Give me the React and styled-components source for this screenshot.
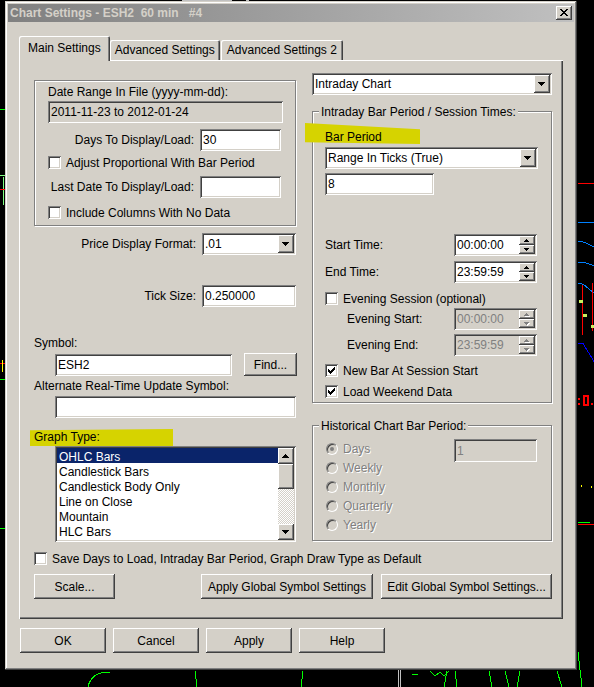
import React from 'react';
import styled, { createGlobalStyle, css } from 'styled-components';

const FACE = '#d4d0c8';
const HL = '#d6d300';

const raised = css`
  box-shadow: inset -1px -1px #404040, inset 1px 1px #ffffff, inset -2px -2px #808080, inset 2px 2px ${FACE};
`;
const sunken = css`
  box-shadow: inset 1px 1px #808080, inset -1px -1px #ffffff, inset 2px 2px #404040, inset -2px -2px ${FACE};
`;

const Global = createGlobalStyle`
  html, body { margin: 0; padding: 0; background: #000; }
  body { font-family: "Liberation Sans", Arial, sans-serif; font-size: 12px; color: #000; }
  * { box-sizing: border-box; }
`;

const Desktop = styled.div`
  position: relative;
  width: 594px;
  height: 687px;
  overflow: hidden;
  background: #000;
  padding: 1px 0 0 5px;
`;

const ChartLayer = styled.svg`
  position: absolute;
  left: 0;
  top: 0;
`;

const Window = styled.div`
  position: relative;
  width: 572px;
  height: 669px;
  padding: 3px;
  background: ${FACE};
  box-shadow: inset -1px -1px #404040, inset 1px 1px ${FACE}, inset -2px -2px #808080, inset 2px 2px #ffffff;
  display: flex;
  flex-direction: column;
`;

const TitleBar = styled.div`
  height: 18px;
  display: flex;
  align-items: center;
  justify-content: space-between;
  padding: 0 2px 0 2px;
  background: linear-gradient(to right, #808080, #c0c0c0);
`;

const TitleText = styled.span`
  font-weight: bold;
  font-size: 12px;
  color: ${FACE};
  white-space: pre;
  line-height: 14px;
`;

const CloseButton = styled.div`
  width: 16px;
  height: 14px;
  background: ${FACE};
  ${raised};
  display: flex;
  align-items: center;
  justify-content: center;
  padding: 0 1px 1px 0;
`;

const Body = styled.div`
  padding: 14px 0 0 11px;
  display: flex;
  flex-direction: column;
`;

const TabRow = styled.div`
  display: flex;
  align-items: flex-end;
  height: 25px;
  margin-bottom: -1px;
  position: relative;
  z-index: 1;
`;

const Tab = styled.div`
  height: ${p => (p.$active ? 25 : 20)}px;
  margin-bottom: ${p => (p.$active ? 0 : 1)}px;
  margin-left: ${p => p.$gap || 0}px;
  padding: 0 ${p => p.$pad}px ${p => (p.$active ? 2 : 0)}px;
  display: flex;
  align-items: center;
  background: ${FACE};
  border-radius: 2px 2px 0 0;
  box-shadow: inset 1px 1px #ffffff, inset -1px 0 #404040, inset -2px 0 #808080;
  white-space: nowrap;
  line-height: 14px;
`;

const Panel = styled.div`
  width: 544px;
  height: 559px;
  background: ${FACE};
  box-shadow: inset 1px 1px #ffffff, inset -1px -1px #404040, inset -2px -2px #808080;
  padding: 13px 11px 0 15px;
  display: flex;
  flex-direction: column;
`;

const Columns = styled.div`
  display: grid;
  grid-template-columns: 262px 240px;
  column-gap: 16px;
  align-items: start;
`;

const Column = styled.div`
  display: flex;
  flex-direction: column;
  margin-top: ${p => p.$mt || 0}px;
`;

const Group = styled.div`
  height: ${p => p.$h}px;
  margin-top: ${p => p.$mt || 0}px;
  border: 1px solid #808080;
  box-shadow: inset 1px 1px #ffffff, 1px 1px #ffffff;
  padding: ${p => p.$pt || 0}px 14px 0 ${p => p.$pl}px;
  display: flex;
  flex-direction: column;
`;

const Legend = styled.span`
  align-self: flex-start;
  margin: -7px 0 0 -6px;
  padding: 0 2px;
  background: ${FACE};
  line-height: 14px;
  height: 14px;
  white-space: nowrap;
`;

const Row = styled.div`
  display: flex;
  align-items: center;
  height: ${p => p.$h || 22}px;
  margin-top: ${p => p.$mt || 0}px;
  margin-left: ${p => p.$ml || 0}px;
  gap: ${p => p.$gap || 0}px;
  justify-content: ${p => p.$justify || 'flex-start'};
`;

const Label = styled.span`
  display: block;
  width: ${p => (p.$w ? `${p.$w}px` : 'auto')};
  text-align: ${p => p.$align || 'left'};
  line-height: 14px;
  height: 14px;
  white-space: nowrap;
  margin-top: ${p => p.$mt || 0}px;
  margin-left: ${p => p.$ml || 0}px;
  color: ${p => (p.$disabled ? '#808080' : '#000')};
  text-shadow: ${p => (p.$disabled ? '1px 1px #ffffff' : 'none')};
`;

const Highlight = styled.span`
  position: relative;
  z-index: 0;
  display: block;
  align-self: flex-start;
  line-height: 14px;
  height: 14px;
  white-space: nowrap;
  margin-top: ${p => p.$mt || 0}px;
  &::before {
    content: '';
    position: absolute;
    z-index: -1;
    left: ${p => p.$l}px;
    top: ${p => p.$t}px;
    width: ${p => p.$w}px;
    height: ${p => p.$h}px;
    background: ${HL};
    clip-path: ${p => p.$clip};
  }
`;

const Field = styled.div`
  width: ${p => p.$w}px;
  height: ${p => p.$h || 22}px;
  margin-top: ${p => p.$mt || 0}px;
  margin-left: ${p => p.$ml || 0}px;
  flex-shrink: 0;
  background: ${p => (p.$face ? FACE : '#ffffff')};
  color: ${p => (p.$disabled ? '#808080' : '#000')};
  ${sunken};
  display: flex;
  align-items: center;
  padding: 0 2px 0 3px;
  white-space: nowrap;
  overflow: hidden;
  line-height: 14px;
`;

const FieldValue = styled.span`
  flex: 1;
  overflow: hidden;
`;

const DropButton = styled.div`
  width: 16px;
  height: ${p => p.$h || 18}px;
  background: ${FACE};
  ${raised};
  display: flex;
  align-items: center;
  justify-content: center;
  flex-shrink: 0;
`;

const SpinColumn = styled.div`
  width: 16px;
  height: 18px;
  display: flex;
  flex-direction: column;
  flex-shrink: 0;
`;

const SpinButton = styled.div`
  height: 9px;
  background: ${FACE};
  ${raised};
  display: flex;
  align-items: center;
  justify-content: center;
`;

const Button = styled.div`
  width: ${p => p.$w}px;
  height: ${p => p.$h || 25}px;
  background: ${FACE};
  ${raised};
  display: flex;
  align-items: center;
  justify-content: center;
  white-space: nowrap;
  line-height: 14px;
  flex-shrink: 0;
`;

const CheckBoxBox = styled.span`
  width: 13px;
  height: 13px;
  background: #ffffff;
  ${sunken};
  display: flex;
  align-items: center;
  justify-content: center;
  flex-shrink: 0;
`;

const RadioCircle = styled.span`
  width: 12px;
  height: 12px;
  margin-left: 1px;
  border-radius: 50%;
  border: 1px solid;
  border-color: #808080 #ffffff #ffffff #808080;
  box-shadow: inset 1px 1px #404040, inset -1px -1px ${FACE};
  background: ${FACE};
  display: flex;
  align-items: center;
  justify-content: center;
  flex-shrink: 0;
`;

const RadioDot = styled.span`
  width: 4px;
  height: 4px;
  border-radius: 50%;
  background: #808080;
`;

const RadioList = styled.div`
  display: flex;
  flex-direction: column;
  gap: 5px;
  margin-top: 9px;
`;

const GroupBodyRow = styled.div`
  display: flex;
  align-items: flex-start;
  justify-content: space-between;
`;

const ListBox = styled.div`
  width: 241px;
  height: 96px;
  margin-top: 2px;
  margin-left: 21px;
  background: #ffffff;
  ${sunken};
  padding: 2px;
  display: flex;
`;

const ListItems = styled.div`
  flex: 1;
  display: flex;
  flex-direction: column;
`;

const ListItem = styled.div`
  height: 15px;
  line-height: 14px;
  padding: 2px 0 0 2px;
  white-space: nowrap;
  background: ${p => (p.$selected ? '#0a246a' : 'transparent')};
  color: ${p => (p.$selected ? '#ffffff' : '#000')};
`;

const ScrollBar = styled.div`
  width: 16px;
  display: flex;
  flex-direction: column;
`;

const ScrollButton = styled.div`
  height: ${p => p.$h}px;
  background: ${FACE};
  ${raised};
  display: flex;
  align-items: center;
  justify-content: center;
  flex-shrink: 0;
`;

const ScrollTrack = styled.div`
  flex: 1;
  background-color: ${FACE};
  background-image: repeating-conic-gradient(#ffffff 0 25%, ${FACE} 0 50%);
  background-size: 2px 2px;
`;

const ButtonRow = styled.div`
  display: flex;
  align-items: center;
  justify-content: space-between;
  margin-top: ${p => p.$mt || 0}px;
`;

const ButtonGroup = styled.div`
  display: flex;
  gap: ${p => p.$gap}px;
  margin-top: ${p => p.$mt || 0}px;
  margin-left: ${p => p.$ml || 0}px;
`;

/* ---------- icons ---------- */

const px = { shapeRendering: 'crispEdges' };

const CloseGlyph = () => (
  <svg width="8" height="7" viewBox="0 0 8 7" style={px}>
    <path
      d="M0 0h2v1H0zM6 0h2v1H6zM1 1h2v1H1zM5 1h2v1H5zM2 2h4v1H2zM3 3h2v1H3zM2 4h4v1H2zM1 5h2v1H1zM5 5h2v1H5zM0 6h2v1H0zM6 6h2v1H6z"
      fill="#000"
    />
  </svg>
);

const CheckGlyph = () => (
  <svg width="7" height="7" viewBox="0 0 7 7" style={px}>
    <path
      d="M6 0h1v1H6zM5 1h2v1H5zM0 2h1v1H0zM4 2h3v1H4zM0 3h2v1H0zM3 3h3v1H3zM0 4h5v1H0zM1 5h3v1H1zM2 6h1v1H2z"
      fill="#000"
    />
  </svg>
);

const TriDown = ({ size = 7, color = '#000', shadow }) => {
  if (size === 7) {
    return (
      <svg width="8" height="5" viewBox="0 0 8 5" style={px}>
        <path d="M0 0h7v1H0zM1 1h5v1H1zM2 2h3v1H2zM3 3h1v1H3z" fill={color} />
      </svg>
    );
  }
  return (
    <svg width="6" height="4" viewBox="0 0 6 4" style={px}>
      {shadow && <path d="M1 1h5v1H1zM2 2h3v1H2zM3 3h1v1H3z" fill="#fff" />}
      <path d="M0 0h5v1H0zM1 1h3v1H1zM2 2h1v1H2z" fill={color} />
    </svg>
  );
};

const TriUp = ({ size = 7, color = '#000', shadow }) => {
  if (size === 7) {
    return (
      <svg width="8" height="5" viewBox="0 0 8 5" style={px}>
        <path d="M3 0h1v1H3zM2 1h3v1H2zM1 2h5v1H1zM0 3h7v1H0z" fill={color} />
      </svg>
    );
  }
  return (
    <svg width="6" height="4" viewBox="0 0 6 4" style={px}>
      {shadow && <path d="M3 1h1v1H3zM2 2h3v1H2zM1 3h5v1H1z" fill="#fff" />}
      <path d="M2 0h1v1H2zM1 1h3v1H1zM0 2h5v1H0z" fill={color} />
    </svg>
  );
};

/* ---------- composite controls ---------- */

const Check = ({ checked, children, mt, ml }) => (
  <Row $h={13} $mt={mt} $ml={ml} $gap={5}>
    <CheckBoxBox>{checked && <CheckGlyph />}</CheckBoxBox>
    <Label>{children}</Label>
  </Row>
);

const Radio = ({ selected, children }) => (
  <Row $h={14} $gap={5}>
    <RadioCircle>{selected && <RadioDot />}</RadioCircle>
    <Label $disabled>{children}</Label>
  </Row>
);

const Select = ({ value, w, mt }) => (
  <Field $w={w} $mt={mt}>
    <FieldValue>{value}</FieldValue>
    <DropButton>
      <TriDown />
    </DropButton>
  </Field>
);

const Spin = ({ value, disabled }) => (
  <Field $w={83} $face={disabled} $disabled={disabled}>
    <FieldValue>{value}</FieldValue>
    <SpinColumn>
      <SpinButton>
        <TriUp size={5} color={disabled ? '#808080' : '#000'} shadow={disabled} />
      </SpinButton>
      <SpinButton>
        <TriDown size={5} color={disabled ? '#808080' : '#000'} shadow={disabled} />
      </SpinButton>
    </SpinColumn>
  </Field>
);

/* ---------- background chart drawing ---------- */

const Chart = () => (
  <ChartLayer width="594" height="687" viewBox="0 0 594 687" style={px}>
    <g fill="none" strokeWidth="1">
      <path d="M182 0.5h50M246 0.5h3" stroke="#c0c0c0" />
      <path d="M0 109.5h5" stroke="#00ff00" />
      <path d="M0 175.5h5M3.5 177v28" stroke="#80ff80" />
      <path d="M0 189.5h5" stroke="#ff0000" />
      <path d="M0 363.5h5" stroke="#ff0000" />
      <path d="M2.5 360v12" stroke="#ffff00" />
      <path d="M0 379.5h5" stroke="#00ff00" />
      <path d="M0 528.5h5" stroke="#00ff00" />
      <path d="M578 183.5h16" stroke="#ff0000" />
      <path d="M578 222.5c5 0 8 1 16 0" stroke="#0080ff" />
      <path d="M578 241c6 0 10 3 16 6" stroke="#0080ff" />
      <path d="M578 262c6 0 10 1 16 4" stroke="#0080ff" />
      <path d="M578 283c6 0 8 4 16 10" stroke="#0080ff" />
      <path d="M582.5 285v50M592.5 283v48" stroke="#ff0000" />
      <path d="M578 343.5h5l11 18" stroke="#0000ff" />
      <path d="M578 522.5h12" stroke="#00ff00" />
      <path d="M578 524.5h16" stroke="#ff0000" />
      <path d="M88 687c2 -10 10 -15 22 -15" stroke="#00ff00" />
      <path d="M195 671l2 16M303 671l-2 16" stroke="#00ff00" />
      <path d="M398.5 670v17M400.5 670v17" stroke="#c0c0c0" />
      <path d="M412 674h6M430 671l5 5 5 -4 4 4 5 -5M447 671l-3 16M455 671l2 16" stroke="#00ff00" />
      <path d="M489 671l3 16M505 671l4 16M520 671l-3 16M557 671l5 16M578 652l4 35" stroke="#00ff00" />
    </g>
    <g fill="#c8f060">
      <rect x="579" y="300" width="4" height="3" />
      <rect x="583" y="314" width="4" height="3" />
      <rect x="591" y="325" width="3" height="3" />
    </g>
    <rect x="581" y="485" width="1" height="2" fill="#ffff00" />
    <rect x="591" y="486" width="1" height="2" fill="#ffff00" />
    <rect x="578" y="398" width="2" height="2" fill="#ff0000" />
    <rect x="578" y="403" width="2" height="2" fill="#ff0000" />
    <rect x="584" y="396" width="4" height="9" fill="none" stroke="#ff0000" strokeWidth="2" />
    <rect x="591" y="403" width="2" height="2" fill="#ff0000" />
  </ChartLayer>
);

/* ---------- app ---------- */

const graphTypes = ['OHLC Bars', 'Candlestick Bars', 'Candlestick Body Only', 'Line on Close', 'Mountain', 'HLC Bars'];

export default function App() {
  return (
    <>
      <Global />
      <Desktop>
        <Chart />
        <Window>
          <TitleBar>
            <TitleText>{'Chart Settings - ESH2  60 min   #4'}</TitleText>
            <CloseButton>
              <CloseGlyph />
            </CloseButton>
          </TitleBar>
          <Body>
            <TabRow>
              <Tab $active $pad={9}>Main Settings</Tab>
              <Tab $pad={5}>Advanced Settings</Tab>
              <Tab $pad={6} $gap={1}>Advanced Settings 2</Tab>
            </TabRow>
            <Panel>
              <Columns>
                <Column $mt={7}>
                  <Group $h={146} $pt={4} $pl={13}>
                    <Label>Date Range In File (yyyy-mm-dd):</Label>
                    <Field $w={235} $mt={2} $face>2011-11-23 to 2012-01-24</Field>
                    <Row $mt={6} $gap={6}>
                      <Label $w={148} $align="right">Days To Display/Load:</Label>
                      <Field $w={81}>30</Field>
                    </Row>
                    <Check mt={5}>Adjust Proportional With Bar Period</Check>
                    <Row $mt={7} $gap={6}>
                      <Label $w={148} $align="right">Last Date To Display/Load:</Label>
                      <Field $w={81} />
                    </Row>
                    <Check mt={8}>Include Columns With No Data</Check>
                  </Group>
                  <Row $mt={7} $gap={6}>
                    <Label $w={162} $align="right">Price Display Format:</Label>
                    <Select value=".01" w={94} />
                  </Row>
                  <Row $mt={30} $gap={6}>
                    <Label $w={162} $align="right">Tick Size:</Label>
                    <Field $w={94}>0.250000</Field>
                  </Row>
                  <Label $mt={29}>Symbol:</Label>
                  <Row $mt={3} $h={23} $ml={21} $gap={12}>
                    <Field $w={177}>ESH2</Field>
                    <Button $w={53} $h={23}>Find...</Button>
                  </Row>
                  <Label $mt={3}>Alternate Real-Time Update Symbol:</Label>
                  <Field $w={241} $mt={3} $ml={21} />
                  <Highlight $mt={12} $l={-4} $t={-1} $w={143} $h={17} $clip="polygon(0 8%, 100% 0, 100% 100%, 0 100%)">
                    Graph Type:
                  </Highlight>
                  <ListBox>
                    <ListItems>
                      {graphTypes.map((g, i) => (
                        <ListItem key={g} $selected={i === 0}>{g}</ListItem>
                      ))}
                    </ListItems>
                    <ScrollBar>
                      <ScrollButton $h={16}><TriUp /></ScrollButton>
                      <ScrollButton $h={25} />
                      <ScrollTrack />
                      <ScrollButton $h={16}><TriDown /></ScrollButton>
                    </ScrollBar>
                  </ListBox>
                </Column>

                <Column>
                  <Select value="Intraday Chart" w={240} />
                  <Group $h={292} $mt={16} $pl={12}>
                    <Legend>Intraday Bar Period / Session Times:</Legend>
                    <Highlight $mt={11} $l={-20} $t={-7} $w={115} $h={21} $clip="polygon(0 0, 100% 30%, 100% 100%, 0 92%)">
                      Bar Period
                    </Highlight>
                    <Select value="Range In Ticks (True)" w={213} mt={3} />
                    <Field $w={109} $mt={4}>8</Field>
                    <Row $mt={39} $justify="space-between">
                      <Label>Start Time:</Label>
                      <Spin value="00:00:00" />
                    </Row>
                    <Row $mt={5} $justify="space-between">
                      <Label>End Time:</Label>
                      <Spin value="23:59:59" />
                    </Row>
                    <Check mt={9}>Evening Session (optional)</Check>
                    <Row $mt={3} $justify="space-between">
                      <Label $ml={22}>Evening Start:</Label>
                      <Spin value="00:00:00" disabled />
                    </Row>
                    <Row $mt={4} $justify="space-between">
                      <Label $ml={22}>Evening End:</Label>
                      <Spin value="23:59:59" disabled />
                    </Row>
                    <Check mt={8} checked>New Bar At Session Start</Check>
                    <Check mt={8} checked>Load Weekend Data</Check>
                  </Group>
                  <Group $h={116} $mt={22} $pl={12}>
                    <Legend>Historical Chart Bar Period:</Legend>
                    <GroupBodyRow>
                      <RadioList>
                        <Radio selected>Days</Radio>
                        <Radio>Weekly</Radio>
                        <Radio>Monthly</Radio>
                        <Radio>Quarterly</Radio>
                        <Radio>Yearly</Radio>
                      </RadioList>
                      <Field $w={83} $h={23} $mt={6} $face $disabled>1</Field>
                    </GroupBodyRow>
                  </Group>
                </Column>
              </Columns>

              <Check mt={10}>Save Days to Load, Intraday Bar Period, Graph Draw Type as Default</Check>
              <ButtonRow $mt={9}>
                <Button $w={81}>Scale...</Button>
                <ButtonGroup $gap={8}>
                  <Button $w={172}>Apply Global Symbol Settings</Button>
                  <Button $w={171}>Edit Global Symbol Settings...</Button>
                </ButtonGroup>
              </ButtonRow>
            </Panel>
            <ButtonGroup $gap={7} $mt={9} $ml={1}>
              <Button $w={86}>OK</Button>
              <Button $w={86}>Cancel</Button>
              <Button $w={86}>Apply</Button>
              <Button $w={86}>Help</Button>
            </ButtonGroup>
          </Body>
        </Window>
      </Desktop>
    </>
  );
}
